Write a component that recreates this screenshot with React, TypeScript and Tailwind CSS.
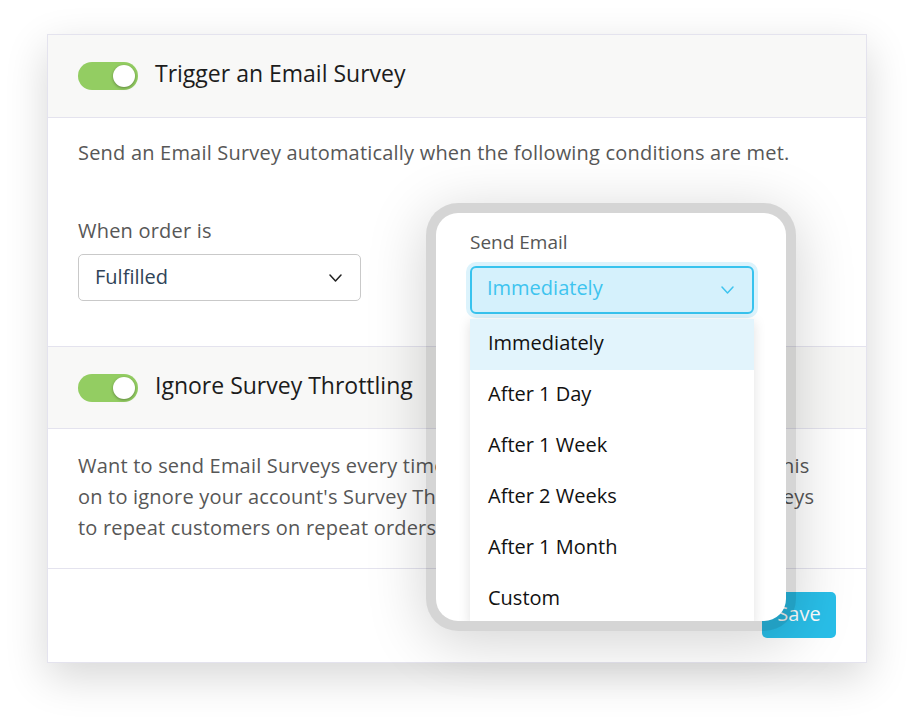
import React from "react";

const font = { fontFamily: "'Open Sans', 'Noto Sans', sans-serif" };

function Toggle() {
  return (
    <div className="relative w-[60px] h-[28px] rounded-full bg-[#93cd62] shrink-0">
      <div className="absolute right-[3px] top-[3px] w-[22px] h-[22px] rounded-full bg-white shadow-[0_1px_3px_rgba(0,0,0,0.35)]" />
    </div>
  );
}

function Chevron({ color }: { color: string }) {
  return (
    <svg width="13" height="8" viewBox="0 0 13 8" fill="none">
      <polyline points="1,1 6.5,7 12,1" stroke={color} strokeWidth="1.5" strokeLinecap="round" strokeLinejoin="round" />
    </svg>
  );
}

export default function App() {
  const items = ["Immediately", "After 1 Day", "After 1 Week", "After 2 Weeks", "After 1 Month", "Custom"];
  return (
    <div className="w-[914px] h-[723px] bg-white pt-[34px] pl-[47px] overflow-hidden" style={font}>
      <div className="relative w-[820px] h-[629px] border border-[#e4e3ee] bg-white shadow-[0_14px_40px_rgba(0,0,0,0.16)] flex flex-col">
        {/* Header 1 */}
        <div className="h-[83px] shrink-0 bg-[#f8f8f7] border-b border-[#e4e3ee] flex items-center pl-[30px] gap-[17px]">
          <Toggle />
          <span className="text-[23px] text-[#1c1c1c] leading-none -mt-[6px]">Trigger an Email Survey</span>
        </div>
        {/* Body 1 */}
        <div className="h-[229px] shrink-0 border-b border-[#e4e3ee] px-[30px] pt-[19px]">
          <p className="text-[20px] leading-[31px] tracking-[0.2px] text-[#575757] whitespace-nowrap">
            Send an Email Survey automatically when the following conditions are met.
          </p>
          <div className="mt-[47px] text-[20px] leading-[31px] tracking-[0.2px] text-[#575757]">When order is</div>
          <div className="mt-[8px] w-[283px] h-[47px] border border-[#c9c9c9] rounded-[5px] flex items-center justify-between pl-[16px] pr-[18px]">
            <span className="text-[20px] text-[#2f4357] -mt-[1px]">Fulfilled</span>
            <Chevron color="#222" />
          </div>
        </div>
        {/* Header 2 */}
        <div className="h-[82px] shrink-0 bg-[#f8f8f7] border-b border-[#e4e3ee] flex items-center pl-[30px] gap-[17px]">
          <Toggle />
          <span className="text-[23px] text-[#1c1c1c] leading-none -mt-[5px]">Ignore Survey Throttling</span>
        </div>
        {/* Body 2 */}
        <div className="h-[140px] shrink-0 border-b border-[#e4e3ee] px-[30px] pt-[21px]">
          <p className="text-[20px] leading-[31px] tracking-[0.2px] text-[#575757] whitespace-nowrap">
            Want to send Email Surveys every time a customer places an order? Turn this
            <br />
            on to ignore your account's Survey Throttling settings and send Email Surveys
            <br />
            to repeat customers on repeat orders.
          </p>
        </div>
        {/* Footer */}
        <div className="flex-1 flex justify-end items-start pt-[23px] pr-[30px]">
          <button className="w-[74px] h-[46px] rounded-[5px] bg-[#29bfe9] text-white text-[20px] leading-none pb-[2px]">Save</button>
        </div>

        {/* Popup */}
        <div className="absolute left-[378px] top-[168px] w-[370px] h-[428px] rounded-[32px] bg-[rgba(0,0,0,0.165)] p-[10px] shadow-[0_10px_60px_rgba(0,0,0,0.18)]">
          <div className="w-full h-full bg-white rounded-[22px] overflow-hidden pl-[34px] pt-[16px]">
            <div className="text-[19px] leading-[26px] text-[#555]">Send Email</div>
            <div className="mt-[11px] w-[284px] h-[48px] rounded-[6px] border-2 border-[#38c3ee] bg-[#d5f1fc] shadow-[0_0_0_4px_#dcf3fc] flex items-center justify-between pl-[15px] pr-[18px]">
              <span className="text-[20px] text-[#3ec4ef] -mt-[4px]">Immediately</span>
              <Chevron color="#3ec4ef" />
            </div>
            <div className="mt-[5px] w-[284px] bg-white shadow-[0_2px_12px_rgba(0,0,0,0.12)]">
              {items.map((it, i) => (
                <div
                  key={it}
                  className={
                    "h-[51px] flex items-center pl-[18px] pb-[4px] text-[20px] text-[#111] " +
                    (i === 0 ? "bg-[#e2f4fc]" : "bg-white")
                  }
                >
                  {it}
                </div>
              ))}
            </div>
          </div>
        </div>
      </div>
    </div>
  );
}
